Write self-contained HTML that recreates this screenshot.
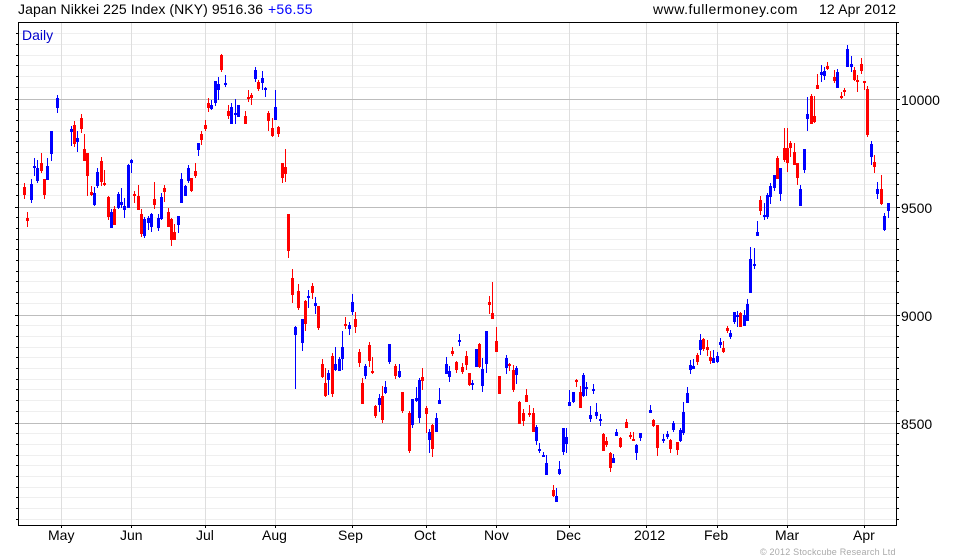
<!DOCTYPE html>
<html><head><meta charset="utf-8"><title>Japan Nikkei 225 Index</title>
<style>html,body{margin:0;padding:0;background:#fff;width:980px;height:560px;overflow:hidden}svg{display:block}text{font-family:"Liberation Sans",Arial,sans-serif;font-size:14px;fill:#000}</style></head>
<body>
<svg width="980" height="560" viewBox="0 0 980 560" xmlns="http://www.w3.org/2000/svg">
<g shape-rendering="crispEdges" fill="none">
<g transform="translate(0,.5)">
<path stroke="#efefef" d="M19 33H896M19 44H896M19 55H896M19 65H896M19 76H896M19 87H896M19 109H896M19 120H896M19 131H896M19 141H896M19 152H896M19 163H896M19 173H896M19 184H896M19 195H896M19 217H896M19 228H896M19 239H896M19 249H896M19 260H896M19 271H896M19 281H896M19 292H896M19 303H896M19 325H896M19 336H896M19 347H896M19 357H896M19 368H896M19 379H896M19 389H896M19 400H896M19 411H896M19 433H896M19 444H896M19 455H896M19 465H896M19 476H896M19 487H896M19 497H896M19 508H896M19 519H896"/>
</g>
<g transform="translate(.5,0)"><path stroke="#dedede" d="M61 23V525M131 23V525M205 23V525M275 23V525M352 23V525M426 23V525M496 23V525M569 23V525M646 23V525M717 23V525M787 23V525M864 23V525"/></g>
<g transform="translate(0,.5)">
<path stroke="#bdbdbd" d="M19 99H896M19 207H896M19 315H896M19 423H896"/>
<path stroke="#000" d="M16 33H18M16 44H18M16 55H18M16 65H18M16 76H18M16 87H18M15 99H18M16 109H18M16 120H18M16 131H18M16 141H18M16 152H18M16 163H18M16 173H18M16 184H18M16 195H18M15 207H18M16 217H18M16 228H18M16 239H18M16 249H18M16 260H18M16 271H18M16 281H18M16 292H18M16 303H18M15 315H18M16 325H18M16 336H18M16 347H18M16 357H18M16 368H18M16 379H18M16 389H18M16 400H18M16 411H18M15 423H18M16 433H18M16 444H18M16 455H18M16 465H18M16 476H18M16 487H18M16 497H18M16 508H18M16 519H18M897 33H899M897 44H899M897 55H899M897 65H899M897 76H899M897 87H899M897 99H900M897 109H899M897 120H899M897 131H899M897 141H899M897 152H899M897 163H899M897 173H899M897 184H899M897 195H899M897 207H900M897 217H899M897 228H899M897 239H899M897 249H899M897 260H899M897 271H899M897 281H899M897 292H899M897 303H899M897 315H900M897 325H899M897 336H899M897 347H899M897 357H899M897 368H899M897 379H899M897 389H899M897 400H899M897 411H899M897 423H900M897 433H899M897 444H899M897 455H899M897 465H899M897 476H899M897 487H899M897 497H899M897 508H899M897 519H899M897 22H899M18 22H897M18 525H897"/>
</g>
<g transform="translate(.5,0)">
<path stroke="#000" d="M18 22V526M896 22V526M61 526V528M131 526V528M205 526V528M275 526V528M352 526V528M426 526V528M496 526V528M569 526V528M646 526V528M717 526V528M787 526V528M864 526V528"/>
<path stroke="#f00" stroke-width="1" d="M24 183V199M27 212V227M41 153V173M44 179V199M74 121V147M81 114V133M84 134V161M87 153V196M91 186V196M101 157V186M104 170V186M108 196V220M114 206V225M134 191V203M138 185V210M141 209V237M154 182V209M164 185V202M168 208V227M171 218V246M174 224V240M191 178V192M195 163V178M201 131V145M205 120V131M208 98V112M221 54V72M228 105V119M245 111V124M248 90V102M251 93V105M258 80V91M268 111V131M272 118V137M278 126V137M282 163V183M285 149V182M288 214V258M292 269V303M298 284V310M305 300V331M312 283V299M318 306V330M322 359V378M325 368V397M332 353V397M345 317V329M355 312V333M359 349V367M362 378V404M369 342V367M372 357V374M375 405V418M382 386V423M395 364V379M402 392V413M409 411V453M422 368V390M426 406V433M432 424V457M452 347V356M456 361V373M462 363V374M466 351V370M469 373V386M479 343V368M489 296V314M492 282V319M496 327V352M499 376V394M509 363V371M513 365V392M519 401V424M523 409V426M526 389V402M529 405V417M533 408V432M553 485V497M576 379V387M580 386V408M603 433V451M606 437V447M610 452V472M620 437V448M626 419V428M630 432V439M633 432V441M653 419V427M657 425V456M670 439V453M677 442V455M697 353V365M703 338V351M707 340V356M710 351V364M723 341V353M727 326V333M740 312V327M760 196V215M777 156V179M784 128V162M787 128V172M790 141V157M794 143V165M797 163V185M811 94V124M814 96V123M817 74V89M827 62V70M834 70V83M841 92V99M844 88V96M854 67V81M857 75V92M861 58V74M864 81V90M867 86V137M874 155V173M881 175V205"/>
<path stroke="#f00" stroke-width="3" d="M24 187V195M27 218V221M41 163V171M44 179V195M74 125V144M81 118V129M84 149V161M87 153V176M91 192V195M101 161V182M104 183V185M108 197V217M114 209V225M134 194V196M138 196V210M141 214V234M154 199V205M164 188V192M168 212V227M171 219V240M174 232V240M191 178V191M195 171V176M201 134V140M205 125V129M208 103V108M221 55V70M228 111V116M245 116V124M248 97V99M251 95V98M258 82V89M268 113V121M272 128V136M278 127V134M282 163V178M285 167V174M288 214V251M292 278V295M298 291V308M305 301V324M312 286V293M318 306V328M322 364V377M325 383V396M332 356V394M345 324V326M355 319V327M359 352V363M362 383V404M369 345V361M372 371V373M375 406V416M382 396V420M395 366V376M402 392V411M409 413V451M422 377V381M426 408V414M432 425V449M452 351V354M456 362V370M462 367V372M466 356V365M469 373V385M479 344V367M489 302V305M492 313V319M496 341V352M499 376V394M509 364V366M513 370V390M519 402V424M523 413V421M526 395V402M529 413V415M533 413V432M553 490V496M576 380V382M580 392V408M603 434V451M606 441V445M610 453V468M620 438V447M626 422V428M630 435V437M633 439V441M653 420V426M657 425V448M670 440V449M677 442V450M697 355V362M703 339V349M707 347V350M710 357V361M723 348V352M727 328V331M740 313V327M760 200V211M777 158V179M784 148V160M787 148V163M790 143V148M794 152V165M797 163V178M811 96V124M814 116V122M817 85V89M827 66V69M834 77V81M841 96V98M844 90V92M854 70V80M857 80V82M861 64V71M864 81V83M867 89V135M874 162V167M881 189V204"/>
<path stroke="#00f" stroke-width="1" d="M31 179V203M34 158V176M37 160V183M47 158V180M51 131V161M57 95V113M71 126V146M77 131V152M94 187V206M97 168V188M111 209V228M118 192V209M121 188V208M124 198V218M128 164V208M131 159V173M144 217V238M148 216V230M151 213V232M158 214V231M161 193V220M178 216V233M181 173V203M185 185V196M188 165V183M198 143V156M211 100V110M215 81V106M218 77V100M225 75V87M231 103V124M235 99V124M238 105V117M255 67V82M262 71V90M265 87V97M275 90V120M295 326V389M302 319V351M308 290V308M315 297V314M328 370V395M335 347V371M339 357V371M342 331V370M349 322V335M352 294V315M365 364V379M379 394V412M385 381V394M389 344V364M399 364V378M412 399V428M416 387V402M419 378V423M429 429V453M436 413V432M439 388V404M446 357V374M449 366V382M459 334V346M472 380V390M476 349V367M482 358V392M486 331V373M506 355V374M516 366V384M536 425V445M539 443V453M543 452V457M546 455V475M556 488V502M559 461V475M563 428V455M566 428V453M569 390V406M573 392V403M583 373V397M586 382V396M590 406V422M593 384V394M596 403V419M600 414V426M613 454V463M616 429V436M636 444V460M640 433V441M650 405V413M663 434V443M667 431V439M673 421V432M680 428V442M683 402V435M687 387V403M690 360V374M693 359V369M700 334V355M713 350V363M717 352V363M720 338V348M730 330V339M734 312V324M737 311V327M744 310V326M747 299V321M750 247V293M754 248V269M757 221V236M764 203V220M767 193V219M770 183V204M774 175V191M780 168V201M800 185V206M804 149V173M807 97V131M821 65V82M824 67V80M837 69V88M847 45V67M851 56V72M871 141V165M877 182V199M884 213V231M888 203V218"/>
<path stroke="#00f" stroke-width="3" d="M31 184V200M34 166V168M37 168V181M47 166V180M51 131V154M57 98V108M71 129V132M77 138V142M94 193V205M97 172V186M111 212V228M118 194V208M121 202V205M124 206V210M128 165V208M131 160V163M144 219V236M148 218V223M151 214V227M158 218V228M161 197V219M178 216V225M181 179V203M185 186V196M188 168V181M198 143V150M211 105V109M215 81V103M218 84V90M225 83V85M231 107V124M235 113V115M238 105V117M255 70V79M262 78V83M265 88V90M275 107V120M295 327V335M302 319V343M308 296V298M315 303V306M328 373V380M335 364V370M339 359V371M342 347V359M349 325V329M352 302V312M365 366V376M379 398V405M385 387V393M389 344V362M399 371V377M412 399V425M416 398V401M419 380V418M429 432V440M436 418V432M439 400V404M446 364V374M449 371V377M459 340V342M472 383V385M476 349V367M482 369V386M486 331V364M506 358V368M516 368V375M536 427V441M539 449V451M543 455V457M546 463V475M556 496V502M559 469V474M563 428V452M566 437V444M569 402V406M573 392V402M583 375V396M586 387V389M590 415V419M593 389V391M596 412V416M600 419V421M613 458V463M616 432V436M636 445V453M640 433V438M650 410V413M663 439V441M667 434V437M673 423V430M680 430V441M683 412V433M687 393V403M690 365V370M693 366V369M700 340V350M713 358V363M717 356V362M720 342V345M730 333V337M734 312V322M737 315V317M744 315V326M747 304V321M750 259V293M754 264V266M757 232V236M764 215V217M767 195V217M770 186V197M774 175V188M780 168V194M800 189V206M804 149V170M807 114V119M821 72V75M824 71V76M837 72V88M847 49V67M851 64V67M871 144V157M877 189V194M884 216V230M888 203V211"/>
</g>
</g>
<text x="18" y="14" textLength="245" lengthAdjust="spacing">Japan Nikkei 225 Index (NKY) 9516.36</text>
<text x="268" y="14" textLength="44.5" lengthAdjust="spacing" style="fill:#00f">+56.55</text>
<text x="653" y="14" textLength="144.5" lengthAdjust="spacing">www.fullermoney.com</text>
<text x="819" y="14" textLength="77" lengthAdjust="spacing">12 Apr 2012</text>
<text x="22" y="40" style="fill:#00c">Daily</text>
<text x="901" y="105">10000</text>
<text x="901" y="213">9500</text>
<text x="901" y="321">9000</text>
<text x="901" y="429">8500</text>
<text x="48" y="540">May</text>
<text x="120" y="540">Jun</text>
<text x="196" y="540">Jul</text>
<text x="262" y="540">Aug</text>
<text x="338" y="540">Sep</text>
<text x="414" y="540">Oct</text>
<text x="484" y="540">Nov</text>
<text x="556" y="540">Dec</text>
<text x="634" y="540">2012</text>
<text x="704" y="540">Feb</text>
<text x="775" y="540">Mar</text>
<text x="853" y="540">Apr</text>
<text x="760" y="555" textLength="135.5" lengthAdjust="spacing" style="font-size:9px;fill:#aaa">© 2012 Stockcube Research Ltd</text>
</svg>
</body></html>
